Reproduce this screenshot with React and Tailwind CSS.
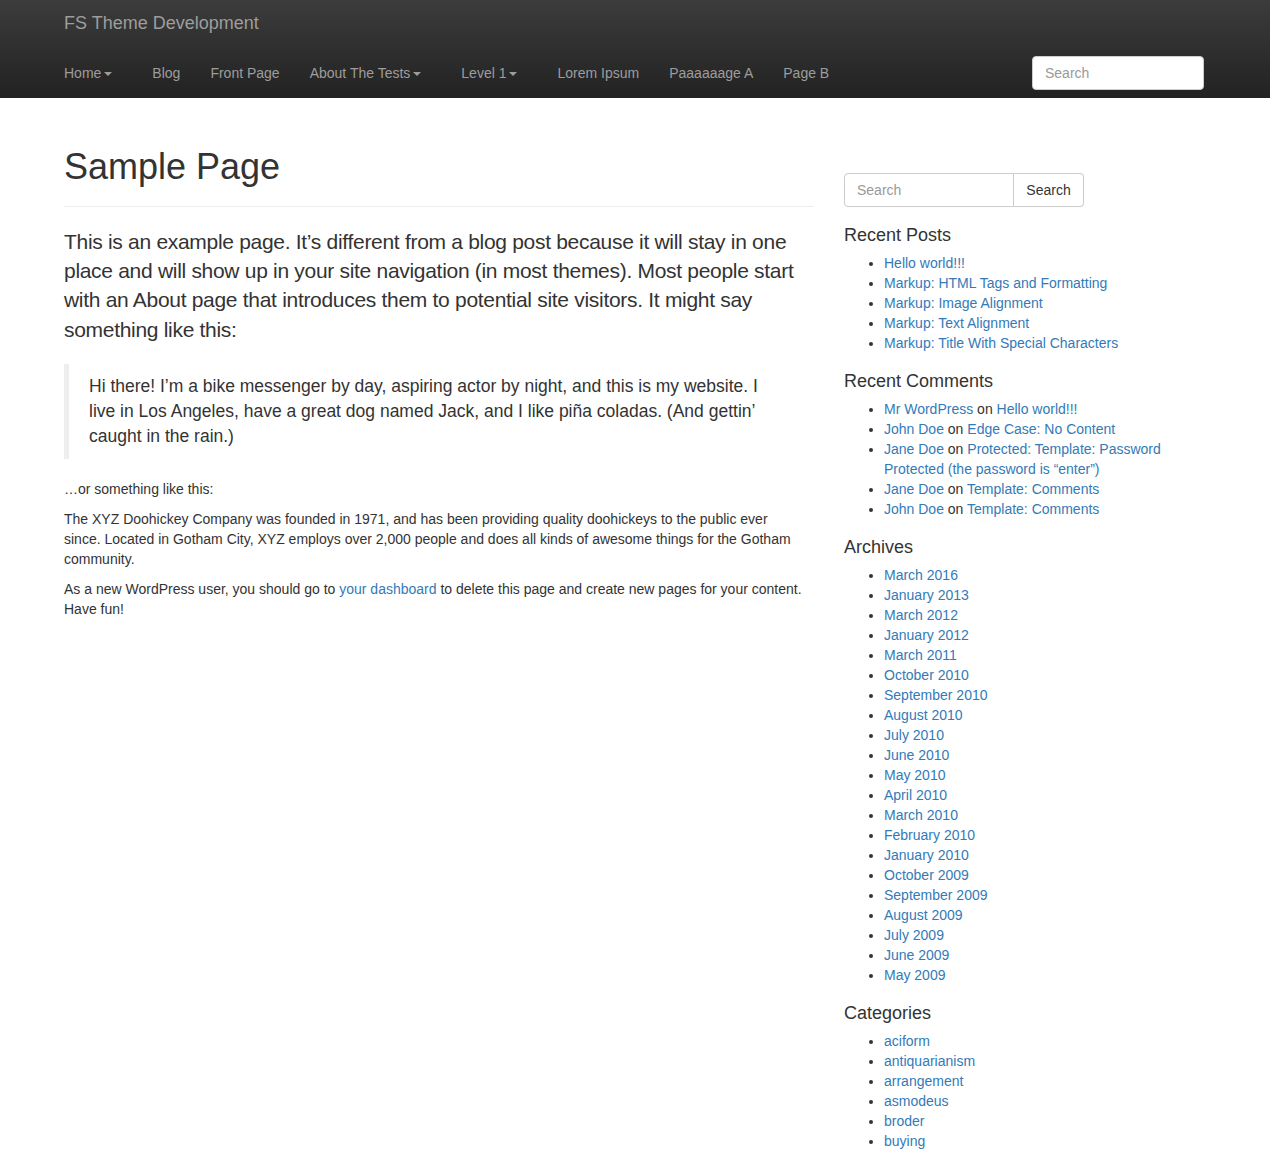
import React from "react";

const navItems = [
  { label: "Home", caret: true },
  { label: "Blog" },
  { label: "Front Page" },
  { label: "About The Tests", caret: true },
  { label: "Level 1", caret: true },
  { label: "Lorem Ipsum" },
  { label: "Paaaaaage A" },
  { label: "Page B" },
];

const recentPosts = [
  "Hello world!!!",
  "Markup: HTML Tags and Formatting",
  "Markup: Image Alignment",
  "Markup: Text Alignment",
  "Markup: Title With Special Characters",
];

const recentComments = [
  ["Mr WordPress", "Hello world!!!"],
  ["John Doe", "Edge Case: No Content"],
  ["Jane Doe", "Protected: Template: Password Protected (the password is “enter”)"],
  ["Jane Doe", "Template: Comments"],
  ["John Doe", "Template: Comments"],
];

const archives = [
  "March 2016",
  "January 2013",
  "March 2012",
  "January 2012",
  "March 2011",
  "October 2010",
  "September 2010",
  "August 2010",
  "July 2010",
  "June 2010",
  "May 2010",
  "April 2010",
  "March 2010",
  "February 2010",
  "January 2010",
  "October 2009",
  "September 2009",
  "August 2009",
  "July 2009",
  "June 2009",
  "May 2009",
];

const categories = ["aciform", "antiquarianism", "arrangement", "asmodeus", "broder", "buying"];

function Caret() {
  return (
    <span className="inline-block w-0 h-0 ml-[3px] align-middle border-x-[4px] border-x-transparent border-t-[4px] border-t-[#9d9d9d]"></span>
  );
}

function Widget({ title, children }) {
  return (
    <section className="mb-[17px]">
      <h4 className="text-[18px] leading-[22px] font-medium text-[#333] mb-[7px]">{title}</h4>
      <ul className="list-disc pl-[40px] text-[#333]">{children}</ul>
    </section>
  );
}

export default function App() {
  return (
    <div className="min-h-screen bg-white text-[14px] leading-[20px] text-[#333] font-['Liberation_Sans','Helvetica_Neue',Arial,sans-serif]">
      {/* NAVBAR */}
      <nav className="h-[98px] bg-gradient-to-b from-[#3c3c3c] to-[#222]">
        <div className="w-[1170px] ml-[49px] px-[15px]">
          <div className="h-[45px] flex items-center">
            <a className="text-[18px] text-[#9d9d9d]">FS Theme Development</a>
          </div>
          <div className="h-[53px] pt-[2px] flex items-center justify-between">
            <ul className="flex items-center text-[#9d9d9d]">
              {navItems.map((item) => (
                <li key={item.label} className={item.caret ? "mr-[40px]" : "mr-[30px]"}>
                  <a className="whitespace-nowrap">
                    {item.label}
                    {item.caret && <Caret />}
                  </a>
                </li>
              ))}
            </ul>
            <input
              type="text"
              placeholder="Search"
              className="w-[172px] h-[34px] bg-white border border-[#ccc] rounded-[4px] px-[12px] text-[14px] text-[#555] placeholder:text-[#999] outline-none"
            />
          </div>
        </div>
      </nav>

      {/* CONTENT */}
      <div className="w-[1170px] ml-[49px] flex">
        <main className="w-[780px] px-[15px]">
          <div className="mt-[49px] pb-[9px] border-b border-[#eee] mb-[20px]">
            <h1 className="text-[36px] leading-[1.1] font-medium text-[#333] mb-[10px]">Sample Page</h1>
          </div>

          <p className="text-[21px] leading-[1.4] font-light tracking-[-0.3px] mb-[20px] whitespace-nowrap">
            This is an example page. It’s different from a blog post because it will stay in one
            <br />
            place and will show up in your site navigation (in most themes). Most people start
            <br />
            with an About page that introduces them to potential site visitors. It might say
            <br />
            something like this:
          </p>

          <blockquote className="border-l-[5px] border-[#eee] py-[10px] px-[20px] mb-[20px] text-[17.5px] leading-[25px]">
            Hi there! I’m a bike messenger by day, aspiring actor by night, and this is my website. I
            <br />
            live in Los Angeles, have a great dog named Jack, and I like piña coladas. (And gettin’
            <br />
            caught in the rain.)
          </blockquote>

          <p className="mb-[10px]">…or something like this:</p>
          <p className="mb-[10px]">
            The XYZ Doohickey Company was founded in 1971, and has been providing quality doohickeys to the public ever
            <br />
            since. Located in Gotham City, XYZ employs over 2,000 people and does all kinds of awesome things for the
            Gotham community.
          </p>
          <p className="mb-[10px]">
            As a new WordPress user, you should go to <a className="text-[#337ab7]">your dashboard</a> to delete this
            page and create new pages for your content. Have fun!
          </p>
        </main>

        <aside className="w-[390px] px-[15px]">
          <form className="mt-[75px] mb-[17px] flex">
            <input
              type="text"
              placeholder="Search"
              className="w-[170px] h-[34px] border border-[#ccc] rounded-l-[4px] px-[12px] text-[14px] placeholder:text-[#999] outline-none"
            />
            <button
              type="button"
              className="w-[70px] h-[34px] border border-l-0 border-[#ccc] rounded-r-[4px] bg-white text-[14px] text-[#333]"
            >
              Search
            </button>
          </form>

          <Widget title="Recent Posts">
            {recentPosts.map((p) => (
              <li key={p}>
                <a className="text-[#337ab7]">{p}</a>
              </li>
            ))}
          </Widget>

          <Widget title="Recent Comments">
            {recentComments.map(([who, post], i) => (
              <li key={i}>
                <a className="text-[#337ab7]">{who}</a> on <a className="text-[#337ab7]">{post}</a>
              </li>
            ))}
          </Widget>

          <Widget title="Archives">
            {archives.map((a) => (
              <li key={a}>
                <a className="text-[#337ab7]">{a}</a>
              </li>
            ))}
          </Widget>

          <Widget title="Categories">
            {categories.map((c) => (
              <li key={c}>
                <a className="text-[#337ab7]">{c}</a>
              </li>
            ))}
          </Widget>
        </aside>
      </div>
    </div>
  );
}
